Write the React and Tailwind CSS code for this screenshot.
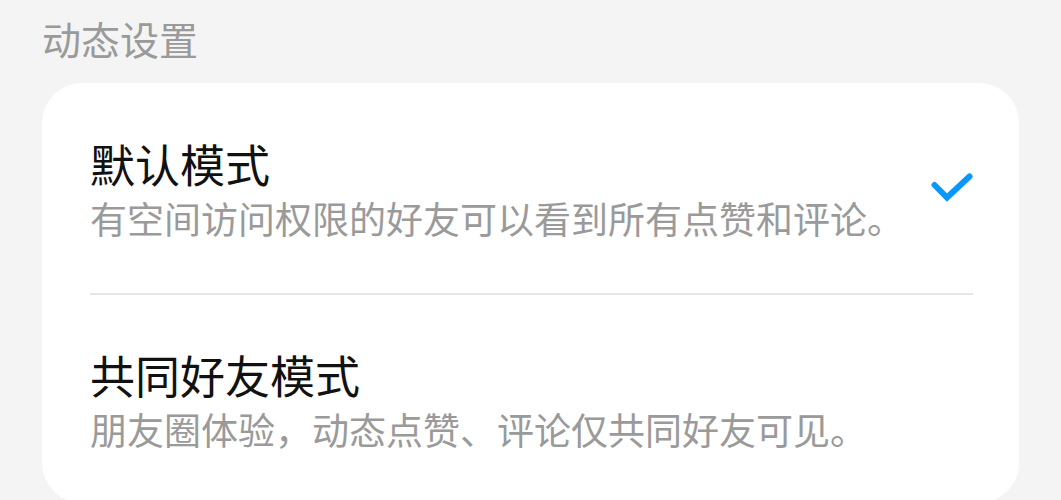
import React from 'react';

const modes = [
  { title: '默认模式', desc: '有空间访问权限的好友可以看到所有点赞和评论。', selected: true },
  { title: '共同好友模式', desc: '朋友圈体验，动态点赞、评论仅共同好友可见。', selected: false },
];

function Check() {
  return (
    <svg width="42" height="30" viewBox="0 0 42 30" fill="none" className="shrink-0">
      <polyline
        points="3.5,12 16,24.5 38.5,3.5"
        stroke="#0a97fd"
        strokeWidth="6"
        strokeLinecap="round"
        strokeLinejoin="miter"
      />
    </svg>
  );
}

export default function App() {
  return (
    <div
      className="min-h-[500px] bg-[#f4f4f4] overflow-hidden"
      style={{ fontFamily: '"Noto Sans CJK SC", "Noto Sans", sans-serif' }}
    >
      {/* Section label */}
      <div className="pl-[42px] pt-[14px] text-[39px] leading-[48px] text-[#9a9a9a]">动态设置</div>

      {/* Options card */}
      <div className="mx-[42px] mt-[21px] bg-white rounded-[40px] pl-[48px] pr-[46px]">
        {modes.map((m, i) => (
          <div key={m.title}>
            {i > 0 && <div className="h-[2px] bg-[#e6e6e6]" />}
            <div className={`flex items-center justify-between ${i === 0 ? 'h-[210px]' : 'h-[208px]'}`}>
              <div>
                <div className="text-[45px] leading-[56px] text-[#111]">{m.title}</div>
                <div className="mt-[3px] text-[37px] leading-[46px] text-[#9a9a9a]">{m.desc}</div>
              </div>
              {m.selected && <Check />}
            </div>
          </div>
        ))}
      </div>
    </div>
  );
}
